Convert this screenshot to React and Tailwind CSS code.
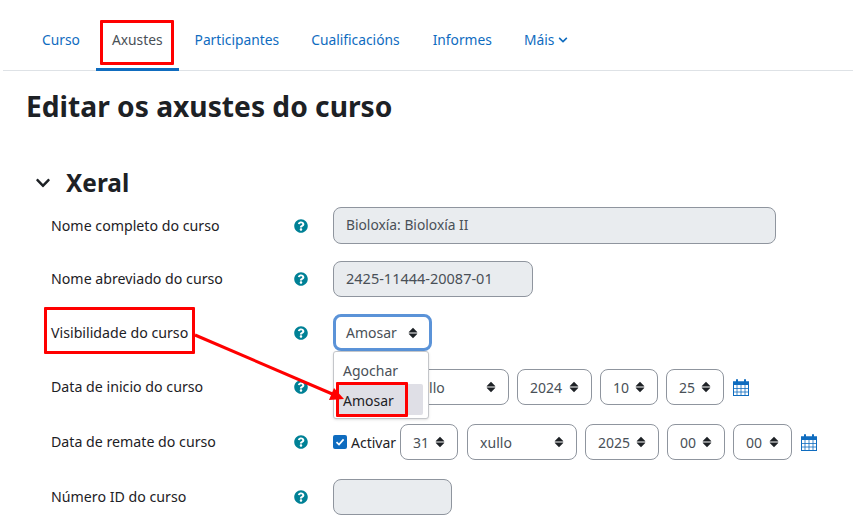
import React from "react";
import { FaQuestionCircle, FaChevronDown } from "react-icons/fa";

const font = { fontFamily: '"Noto Sans", sans-serif' };

function Arrows({ className = "" }) {
  return (
    <svg width="10" height="12" viewBox="0 0 10 12" className={className}>
      <path d="M5 .8 9.2 4.9a.4.4 0 0 1-.3.7H1.1a.4.4 0 0 1-.3-.7Z" fill="#1d2125" />
      <path d="M5 11.2.8 7.1a.4.4 0 0 1 .3-.7h7.8a.4.4 0 0 1 .3.7Z" fill="#1d2125" />
    </svg>
  );
}

function Calendar() {
  return (
    <svg width="16" height="17" viewBox="0 0 16 17" className="shrink-0">
      <rect x=".5" y="3" width="15" height="13.5" fill="#fff" stroke="#0f6cbf" />
      <rect x="0" y="2.5" width="16" height="3.5" fill="#0f6cbf" />
      <rect x="3" y="0" width="2" height="4.5" rx="1" fill="#0f6cbf" />
      <rect x="11" y="0" width="2" height="4.5" rx="1" fill="#0f6cbf" />
      <path d="M4 6v10M8 6v10M12 6v10M1 9.5h14M1 13h14" stroke="#0f6cbf" strokeWidth=".8" />
    </svg>
  );
}

function Select({ value, width }) {
  return (
    <div
      className="flex h-full items-center justify-between rounded-lg border border-[#8f959e] bg-white pl-[12px] pr-[12px] text-[14px] text-[#495057]"
      style={{ width }}
    >
      <span>{value}</span>
      <Arrows />
    </div>
  );
}

function Row({ label, height, mb, children }) {
  return (
    <div className="flex items-center pl-[51px]" style={{ height, marginBottom: mb }}>
      <div className="w-[243px] text-[14.2px] text-[#1d2125]">{label}</div>
      <FaQuestionCircle className="mr-[25px] shrink-0 text-[14px] text-[#008196]" />
      <div className="flex h-full items-center">{children}</div>
    </div>
  );
}

export default function App() {
  return (
    <div className="relative h-[528px] w-[853px] overflow-hidden bg-white" style={font}>
      {/* tabs */}
      <div className="ml-[3px] flex h-[71px] items-stretch border-b border-[#dee2e6] pl-[23px] text-[13.8px] text-[#0f6cbf]">
        <div className="flex items-center px-[16px] pt-[10px]">Curso</div>
        <div className="mb-[-1px] flex items-center border-b-[3px] border-[#0f6cbf] px-[16px] pt-[12px] text-[#495057]">Axustes</div>
        <div className="flex items-center px-[16px] pt-[10px]">Participantes</div>
        <div className="flex items-center px-[16px] pt-[10px]">Cualificacións</div>
        <div className="flex items-center pl-[17px] pr-[16px] pt-[10px]">Informes</div>
        <div className="flex items-center gap-[4px] px-[16px] pt-[10px]">
          Máis <FaChevronDown className="text-[10px]" />
        </div>
      </div>

      <h1 className="mt-[14px] pl-[26px] text-[28.2px] leading-[42px] font-bold text-[#1d2125]">Editar os axustes do curso</h1>

      <div className="mt-[36px] flex h-[40px] items-center pl-[35px] text-[#1d2125]">
        <FaChevronDown className="mr-[15px] text-[16px]" />
        <h2 className="text-[24.4px] font-bold">Xeral</h2>
      </div>

      <div className="mt-[4px]">
        <Row label="Nome completo do curso" height={37} mb={17}>
          <div className="flex h-full w-[443px] items-center rounded-lg border border-[#8f959e] bg-[#e9ecef] px-[12px] text-[13.8px] text-[#495057]">Bioloxía: Bioloxía II</div>
        </Row>
        <Row label="Nome abreviado do curso" height={36} mb={17}>
          <div className="flex h-full w-[200px] items-center rounded-lg border border-[#8f959e] bg-[#e9ecef] px-[12px] text-[14.5px] text-[#495057]">2425-11444-20087-01</div>
        </Row>
        <Row label="Visibilidade do curso" height={37} mb={18}>
          <div className="flex h-full w-[99px] items-center justify-between rounded-lg border-[3px] border-[#5b93d8] bg-white pl-[10px] pr-[11px] text-[14px] text-[#495057]">
            <span>Amosar</span>
            <Arrows />
          </div>
        </Row>
        <Row label="Data de inicio do curso" height={36} mb={19}>
          <div className="flex h-full items-center gap-[8px]">
            {/* day select sits fully behind the open dropdown */}
            <Select value="" width={59} />
            <Select value="xullo" width={109} />
            <Select value="2024" width={75} />
            <Select value="10" width={58} />
            <Select value="25" width={58} />
            <div className="ml-[1px]"><Calendar /></div>
          </div>
        </Row>
        <Row label="Data de remate do curso" height={36} mb={19}>
          <div className="flex h-full items-center">
            <span className="flex h-[14px] w-[14px] items-center justify-center rounded-[2px] bg-[#0f6cbf]">
              <svg width="10" height="10" viewBox="0 0 10 10">
                <path d="M1.5 5.2 4 7.6 8.6 2.4" fill="none" stroke="#fff" strokeWidth="1.7" />
              </svg>
            </span>
            <span className="mr-[4px] ml-[4px] text-[14px] text-[#1d2125]">Activar</span>
            <div className="flex h-full items-center gap-[8px]">
              <Select value="31" width={58} />
              <div className="ml-[1px] h-full"><Select value="xullo" width={110} /></div>
              <Select value="2025" width={74} />
              <Select value="00" width={58} />
              <Select value="00" width={59} />
              <div className="ml-[1px]"><Calendar /></div>
            </div>
          </div>
        </Row>
        <Row label="Número ID do curso" height={36} mb={0}>
          <div className="h-full w-[119px] rounded-lg border border-[#8f959e] bg-[#e9ecef]" />
        </Row>
      </div>

      {/* open dropdown */}
      <div className="absolute top-[351px] left-[333px] h-[68px] w-[96px] rounded-[3px] border border-[#c4c6ca] bg-white text-[14px] text-[#495057] shadow-sm">
        <div className="px-[9px] pt-[9px] leading-[20px]">Agochar</div>
        <div className="mx-[5px] mt-[3px] h-[31px] rounded-[2px] bg-[#dfdfe6] pl-[4px] leading-[33px] text-[#1d2125]">Amosar</div>
      </div>

      {/* annotations */}
      <div className="pointer-events-none absolute top-[20px] left-[100px] h-[45px] w-[74px] rounded-[1px] border-[3px] border-[#f00]" />
      <div className="pointer-events-none absolute top-[307px] left-[44px] h-[47px] w-[151px] rounded-[1px] border-[3px] border-[#f00]" />
      <div className="pointer-events-none absolute top-[382px] left-[336px] h-[35px] w-[72px] rounded-[1px] border-[3px] border-[#f00]" />
      <svg className="pointer-events-none absolute top-0 left-0" width="853" height="528">
        <path d="M195 335 337 396" stroke="#f00" strokeWidth="3" />
        <path d="M344 399 329 400 334 388Z" fill="#f00" />
      </svg>
    </div>
  );
}
